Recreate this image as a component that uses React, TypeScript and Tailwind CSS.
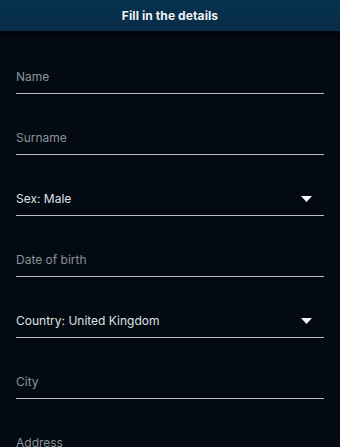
import { useState } from 'react';

type Field = {
  label: string;
  value?: string;
  select?: boolean;
};

const FIELDS: Field[] = [
  { label: 'Name' },
  { label: 'Surname' },
  { label: 'Sex', value: 'Male', select: true },
  { label: 'Date of birth' },
  { label: 'Country', value: 'United Kingdom', select: true },
  { label: 'City' },
  { label: 'Address' },
];

function Caret() {
  return (
    <svg width="11" height="6" viewBox="0 0 11 6" className="mr-[12px]">
      <path d="M0 0 H11 L5.5 6 Z" fill="#f2f4f6" />
    </svg>
  );
}

function FormRow({ field }: { field: Field }) {
  return (
    <div className="flex h-[61px] items-end border-b border-[#b9bec4] pb-[8px]">
      {field.select ? (
        <div className="flex w-full items-center justify-between">
          <span className="text-[12px] leading-[16px] text-[#dfe2e6]">
            {field.label}: {field.value}
          </span>
          <Caret />
        </div>
      ) : (
        <span className="text-[12px] leading-[16px] text-[#8b929a]">{field.label}</span>
      )}
    </div>
  );
}

export default function App() {
  const [fields] = useState(FIELDS);
  return (
    <div
      className="h-[447px] w-[340px] overflow-hidden bg-[#040a11]"
      style={{ fontFamily: 'Inter, "Open Sans", sans-serif' }}
    >
      <div className="flex h-[31px] items-center justify-center bg-gradient-to-b from-[#05324f] to-[#0a2c47] shadow-[0_2px_4px_rgba(0,0,0,0.6)]">
        <span className="text-[12px] font-bold tracking-[0.1px] text-[#f1f4f7]">Fill in the details</span>
      </div>
      <div className="px-[16px] pt-[2px]">
        {fields.map((f) => (
          <FormRow key={f.label} field={f} />
        ))}
      </div>
    </div>
  );
}
